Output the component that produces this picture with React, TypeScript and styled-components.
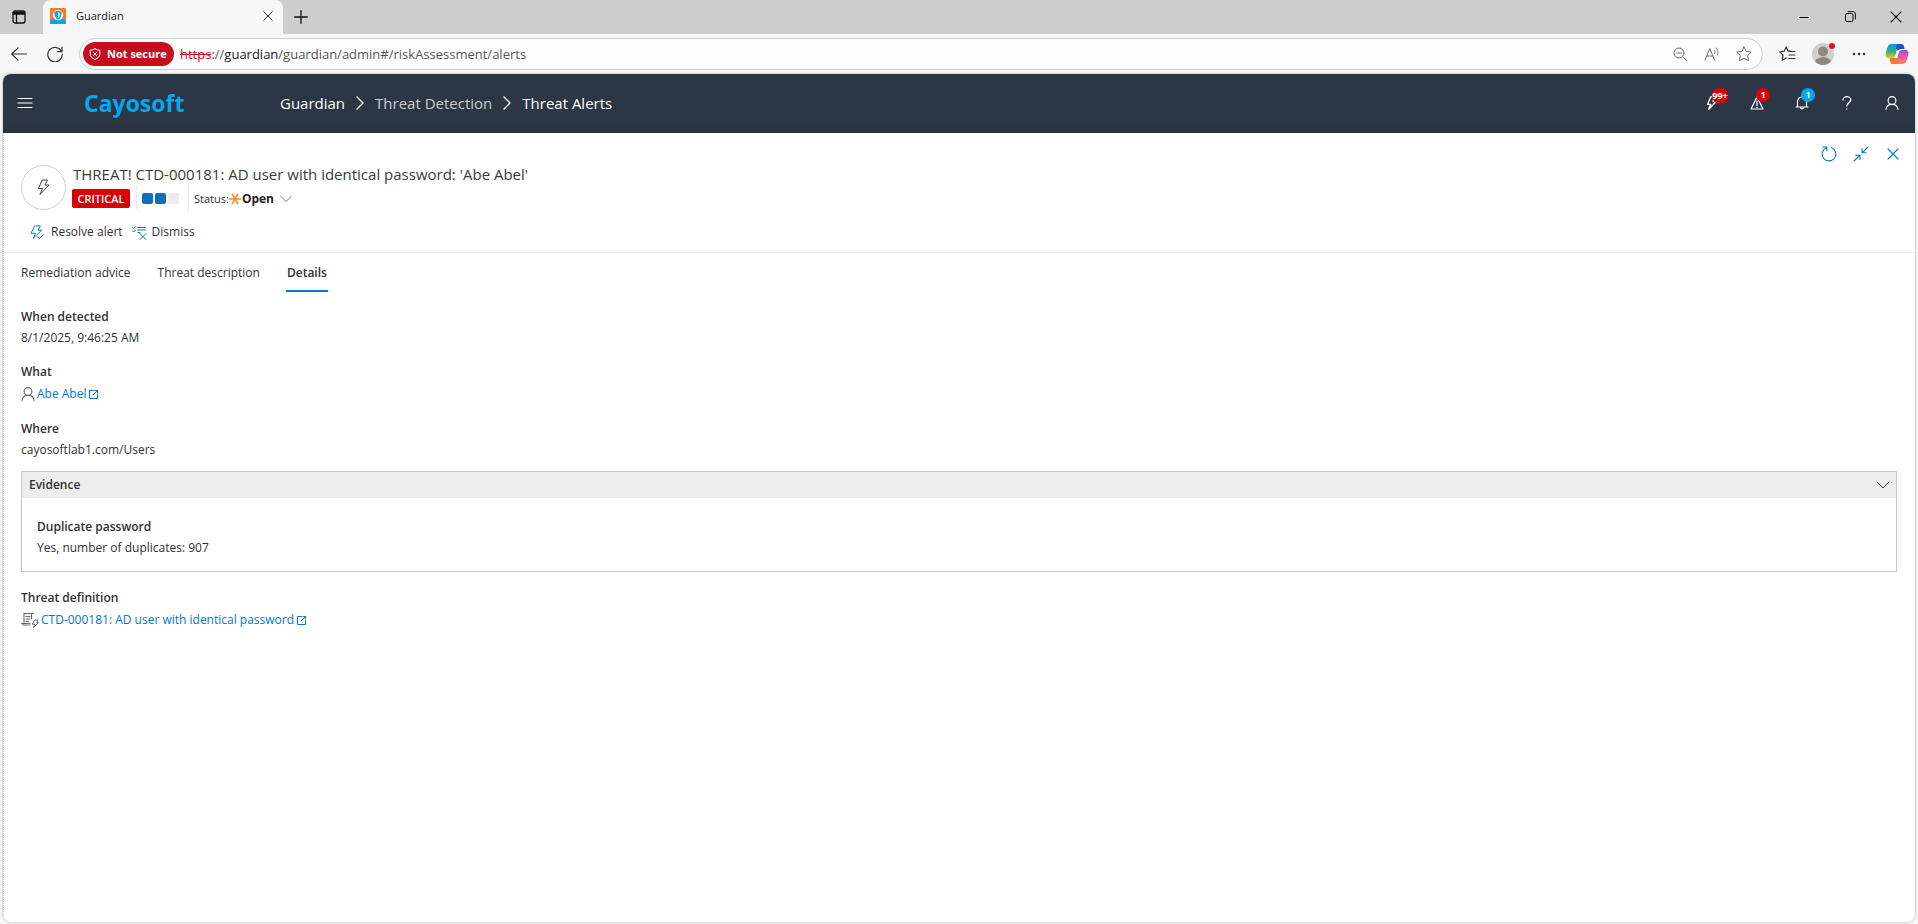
import React, { useState } from "react";
import styled, { createGlobalStyle, css } from "styled-components";

const GlobalStyle = createGlobalStyle`
  * { box-sizing: border-box; }
  html, body { margin: 0; padding: 0; }
  body {
    background: #f7f7f7;
    color: #323130;
    font-family: "Open Sans", "Noto Sans", sans-serif;
    font-size: 12px;
    line-height: 20px;
  }
  button, select { font: inherit; color: inherit; }
  h1, h2, dl, dd, dt, ol, p { margin: 0; padding: 0; font: inherit; }
  a { color: inherit; text-decoration: none; }
`;

/* ---------- browser frame ---------- */

const Window = styled.div`
  min-height: 100vh;
  display: flex;
  flex-direction: column;
`;

const TabStrip = styled.header`
  display: flex;
  height: 34px;
  background: #cdcdcd;
`;

const Plain = styled.button`
  display: inline-flex;
  align-items: center;
  justify-content: center;
  padding: 0;
  border: 0;
  background: none;
  cursor: pointer;
  position: relative;
`;

const StripButton = styled(Plain)<{ $w: number }>`
  width: ${(p) => p.$w}px;
  height: 34px;
  padding-bottom: 1px;
  color: #111;
`;

const Tab = styled.div`
  display: flex;
  align-items: center;
  width: 240px;
  margin-left: 5px;
  padding: 0 10px 2px 7px;
  gap: 10px;
  background: #f7f7f7;
  border-radius: 8px 8px 0 0;
  color: #1b1b1b;
  font-size: 11px;
`;

const TabTitle = styled.span`
  flex: 1;
`;

const Spacer = styled.div`
  flex: 1;
`;

const Toolbar = styled.div`
  display: flex;
  align-items: center;
  height: 40px;
  color: #333;
`;

const ToolButton = styled(Plain)<{ $w: number }>`
  width: ${(p) => p.$w}px;
  height: 30px;
`;

const AddressBar = styled.div`
  flex: 1;
  display: flex;
  align-items: center;
  height: 32px;
  margin: 0 7px 0 6px;
  padding: 0 2px 0 3px;
  border: 1px solid #cfcfd3;
  border-radius: 16px;
  background: #fdfdfd;
  color: #6a6a6a;
`;

const SecurityPill = styled.button`
  display: flex;
  align-items: center;
  gap: 6px;
  height: 24px;
  width: 91px;
  padding: 0 0 0 6px;
  border: 0;
  border-radius: 12px;
  background: #c50f1f;
  color: #fff;
  font-size: 11px;
  font-weight: 700;
  white-space: nowrap;
`;

const Url = styled.div`
  flex: 1;
  margin-left: 6px;
  font-size: 13px;
  color: #555;
  outline: none;
  s { color: #c50f1f; }
  b { color: #1b1b1b; font-weight: 400; }
`;

/* ---------- application frame ---------- */

const AppFrame = styled.div`
  flex: 1;
  display: flex;
  flex-direction: column;
  margin: 0 3px 2px;
  border-radius: 8px;
  background: #fff;
  overflow: hidden;
  box-shadow: 0 0 3px rgba(0, 0, 0, 0.3);
`;

const AppBar = styled.header`
  display: flex;
  align-items: center;
  height: 59px;
  padding: 0 1px 2px 0;
  background: linear-gradient(#2d3645 70%, #29323f);
  color: #fff;
`;

const MenuButton = styled(Plain)`
  width: 44px;
  height: 45px;
`;

const Brand = styled.a`
  width: 197px;
  padding-left: 37px;
  color: #00a9ee;
  font-size: 23px;
  line-height: 30px;
  font-weight: 700;
`;

const Crumbs = styled.nav`
  ol {
    display: flex;
    align-items: center;
    margin-left: 36px;
    list-style: none;
    font-size: 15px;
  }
  li {
    display: flex;
    align-items: center;
  }
  svg { margin: 0 10px; }
`;

const Crumb = styled.a<{ $dim?: boolean }>`
  color: ${(p) => (p.$dim ? "#c9cbce" : "#fff")};
`;

const BarButton = styled(Plain)`
  width: 45px;
  height: 45px;
`;

const Badge = styled.span<{ $color: string; $wide?: boolean }>`
  position: absolute;
  left: ${(p) => (p.$wide ? 23 : 22)}px;
  top: 8px;
  width: ${(p) => (p.$wide ? 16 : 14)}px;
  height: ${(p) => (p.$wide ? 16 : 14)}px;
  display: flex;
  align-items: center;
  justify-content: center;
  border-radius: 8px;
  background: ${(p) => p.$color};
  color: #fff;
  font-size: 9px;
  font-weight: 700;
`;

/* ---------- alert panel ---------- */

const Panel = styled.main`
  flex: 1;
  border-left: 1px dotted #c8c8c8;
`;

const PanelHeader = styled.div`
  display: flex;
  justify-content: space-between;
  align-items: flex-start;
  padding: 5px 6px 0 17px;
`;

const Identity = styled.div`
  display: flex;
  align-items: center;
  gap: 6px;
  margin-top: 24px;
`;

const Avatar = styled.div`
  display: flex;
  align-items: center;
  justify-content: center;
  width: 45px;
  height: 45px;
  margin-top: 1px;
  border: 1px solid #d2d0ce;
  border-radius: 50%;
  color: #444;
`;

const Title = styled.h1`
  font-size: 15px;
  line-height: 24px;
  padding-left: 1px;
  color: #3b3a39;
`;

const Meta = styled.div`
  display: flex;
  align-items: center;
  height: 25px;
`;

const Severity = styled.span`
  width: 58px;
  height: 19px;
  margin-right: 6px;
  border-radius: 2px;
  background: #d90007;
  color: #fff;
  font-size: 11px;
  line-height: 19px;
  font-weight: 600;
  text-align: center;
`;

const Level = styled.span`
  display: flex;
  align-items: center;
  gap: 2px;
  width: 53px;
  height: 25px;
  padding-left: 5px;
  border: 1px solid #edebe9;
  border-width: 0 1px;
`;

const LevelCell = styled.span<{ $on: boolean }>`
  width: 11px;
  height: 11px;
  border-radius: 2px;
  background: ${(p) => (p.$on ? "#106ebe" : "#edebe9")};
`;

const Status = styled.label`
  display: flex;
  align-items: center;
  padding-left: 5px;
  font-size: 11px;
  svg { color: #605e5c; }
  svg:first-of-type { margin-right: 1px; }
`;

const StatusSelect = styled.select`
  width: 38px;
  padding: 0;
  border: 0;
  appearance: none;
  background: none;
  font-size: 12px;
  font-weight: 700;
  color: #252423;
`;

const Actions = styled.div`
  display: flex;
`;

const ActionButton = styled(Plain)`
  width: 32px;
  height: 32px;
  color: #0078d4;
`;

const CommandBar = styled.div`
  display: flex;
  align-items: center;
  gap: 9px;
  height: 42px;
  padding: 1px 0 0 26px;
  border-bottom: 1px solid #edebe9;
`;

const Command = styled(Plain)<{ $gap: number }>`
  gap: ${(p) => p.$gap}px;
  svg { color: #0078d4; }
`;

const Tabs = styled.div`
  display: flex;
  gap: 25px;
  height: 39px;
  padding-left: 16px;
`;

const PanelTab = styled.button<{ $active: boolean }>`
  padding: 0 1px;
  border: 0;
  border-top: 2px solid transparent;
  border-bottom: 2px solid transparent;
  background: none;
  cursor: pointer;
  ${(p) =>
    p.$active &&
    css`
      border-bottom-color: #0078d4;
      font-weight: 600;
    `}
`;

const Details = styled.div`
  display: flex;
  flex-direction: column;
  gap: 13px;
  padding: 15px 18px 20px 17px;
`;

const Field = styled.dl`
  dt { font-weight: 600; }
  dd { line-height: 22px; }
`;

const LinkField = styled(Field)`
  dd {
    display: flex;
    align-items: center;
    gap: 2px;
    line-height: 24px;
    color: #666;
  }
`;

const ExternalLink = styled.a`
  display: flex;
  align-items: center;
  gap: 3px;
  color: #0078d4;
`;

const Evidence = styled.section`
  margin: -3px 0 3px;
  border: 1px solid #c8c8c8;
`;

const EvidenceHeader = styled.button`
  display: flex;
  align-items: center;
  justify-content: space-between;
  width: 100%;
  height: 26px;
  padding: 0 6px 0 7px;
  border: 0;
  background: #ededed;
  font-weight: 600;
`;

const EvidenceBody = styled.div`
  padding: 19px 15px 12px;
`;

/* ---------- icons ---------- */

type IconProps = { w?: number; h?: number; box?: string; sw?: number; children: React.ReactNode };

const Icon = ({ w = 16, h = 16, box, sw = 1, children }: IconProps) => (
  <svg
    width={w}
    height={h}
    viewBox={box ?? `0 0 ${w} ${h}`}
    fill="none"
    stroke="currentColor"
    strokeWidth={sw}
    strokeLinecap="round"
    strokeLinejoin="round"
    aria-hidden="true"
  >
    {children}
  </svg>
);

const CloseIcon = ({ size = 12 }: { size?: number }) => (
  <Icon w={size} h={size} box="0 0 12 12" sw={1.1}>
    <path d="M1 1l10 10M11 1L1 11" />
  </Icon>
);

const bolt = "M6.500 1H11.500L9 6H13L4 15.500 6.500 9.500H3z";

const PersonIcon = ({ w = 14 }: { w?: number }) => (
  <Icon w={w} h={w} box="0 0 14 14" sw={1.1}>
    <circle cx="7" cy="4.500" r="3.900" />
    <path d="M1 13.500C1.300 10.500 3.500 8.400 7 8.400s5.700 2.100 6 5.100" />
  </Icon>
);

const ExternalIcon = () => (
  <Icon w={10} h={10}>
    <path d="M4.500 1.500H.5v8H8.500V5.500M6 1.500H8.500V4M8.300 1.700L4 6" />
  </Icon>
);

const ChevronDown = ({ w = 12 }: { w?: number }) => (
  <Icon w={w} h={8} box="0 0 14 8">
    <path d="M1 1l6 6 6-6" />
  </Icon>
);

const CrumbChevron = () => (
  <Icon w={10} h={14} sw={1.4}>
    <path d="M2 1l6 6-6 6" />
  </Icon>
);

const CopilotIcon = () => (
  <svg width="24" height="22" viewBox="0 0 24 22" aria-hidden="true">
    <defs>
      <linearGradient id="cool" x1="0" y1="0" x2="0" y2="1">
        <stop offset="0" stopColor="#1a8fe8" />
        <stop offset=".55" stopColor="#2fb38a" />
        <stop offset="1" stopColor="#f2c71c" />
      </linearGradient>
      <linearGradient id="warm" x1="0" y1="0" x2="0" y2="1">
        <stop offset="0" stopColor="#9a4be8" />
        <stop offset=".55" stopColor="#ee5a9c" />
        <stop offset="1" stopColor="#fb8a4c" />
      </linearGradient>
    </defs>
    <path d="M7 1h9c-2 0-2.800 1.200-3.300 3l-2.200 8c-.6 2-1.500 3-3.500 3H4c-3 0-4-2-3.200-5l1.600-5.500C3.200 2 4.500 1 7 1z" fill="url(#cool)" />
    <path d="M12 1h4c1.700 0 2.400 1 2.900 2.600l.7 2.400H16c-1.500 0-2.300.7-2.700 2L11 6z" fill="#1557c8" />
    <path d="M17 21H8c2 0 2.800-1.200 3.300-3l2.200-8c.6-2 1.500-3 3.500-3h3c3 0 4 2 3.200 5l-1.600 5.500C20.800 20 19.500 21 17 21z" fill="url(#warm)" />
    <path d="M12 21H8c-1.700 0-2.400-1-2.900-2.600L4.400 15H8c1.500 0 2.300-.7 2.700-2l2 3z" fill="#f0793a" />
    <path d="M13 7h3.500c-2 .2-2.600 1.500-3 3l-1.300 5H9c1.200-.5 1.500-1.600 1.900-3z" fill="#fff" />
  </svg>
);

const Favicon = () => (
  <svg width="16" height="16" viewBox="0 0 16 16" aria-hidden="true">
    <rect width="16" height="16" rx="1" fill="#ff7a1a" />
    <path d="M0 12.500L4 11h8l4 1.500V16H0z" fill="#00a9ee" />
    <circle cx="8" cy="7" r="5.200" fill="#fff" />
    <path d="M8 2.500l3.800 1.300c0 3.800-.8 6-3.800 8-3-2-3.800-4.200-3.800-8z" fill="#1ba1e2" />
    <path d="M8 4.200l2.200.8c0 2.500-.6 4-2.200 5.200z" fill="#d9f2fd" />
  </svg>
);

/* ---------- page ---------- */

const tabNames = ["Remediation advice", "Threat description", "Details"];

export default function App() {
  const [tab, setTab] = useState("Details");
  const [open, setOpen] = useState(true);

  return (
    <Window>
      <GlobalStyle />
      <TabStrip>
        <StripButton $w={38} aria-label="Tab actions">
          <Icon w={14} h={14} sw={1.3}>
            <rect x="1" y="1" width="12" height="12" rx="2" />
            <path d="M1.500 2.500h11M1.500 4h11" strokeWidth="1.600" />
            <path d="M4.500 4.500V13" />
          </Icon>
        </StripButton>
        <Tab>
          <Favicon />
          <TabTitle>Guardian</TabTitle>
          <Plain aria-label="Close tab">
            <CloseIcon size={10} />
          </Plain>
        </Tab>
        <StripButton $w={36} aria-label="New tab">
          <Icon w={14} h={14} sw={1.3}>
            <path d="M7 .7v12.600M.7 7h12.600" />
          </Icon>
        </StripButton>
        <Spacer />
        <StripButton $w={46} aria-label="Minimize">
          <Icon w={10} h={10}>
            <path d="M0 5.500h10" />
          </Icon>
        </StripButton>
        <StripButton $w={46} aria-label="Restore">
          <Icon w={11} h={11}>
            <rect x=".5" y="2.500" width="7.500" height="8" rx="1.500" />
            <path d="M3 .6h5a2.400 2.400 0 0 1 2.400 2.400v5" />
          </Icon>
        </StripButton>
        <StripButton $w={45} aria-label="Close window">
          <CloseIcon size={12} />
        </StripButton>
      </TabStrip>

      <Toolbar>
        <ToolButton $w={37} aria-label="Back">
          <Icon w={16} h={14} sw={1.1}>
            <path d="M15.500 7H.7M7 .8L.7 7 7 13.200" />
          </Icon>
        </ToolButton>
        <ToolButton $w={36} aria-label="Refresh">
          <Icon w={16} h={16} sw={1.2}>
            <path d="M14.500 5.500A7.200 7.200 0 1 0 15.200 8M15 1v4.700h-4.700" />
          </Icon>
        </ToolButton>
        <AddressBar>
          <SecurityPill>
            <Icon w={12} h={12} sw={1}>
              <path d="M6 .6c1.500 1.100 3 1.500 4.800 1.600v3.600c0 2.800-1.800 4.500-4.800 5.700C3 10.300 1.200 8.600 1.200 5.800V2.200C3 2.100 4.500 1.700 6 .6zM4.300 4.300l3.400 3.400M7.700 4.300L4.300 7.700" />
            </Icon>
            Not secure
          </SecurityPill>
          <Url role="textbox" aria-label="Address">
            <s>https</s>://<b>guardian</b>/guardian/admin#/riskAssessment/alerts
          </Url>
          <ToolButton $w={32} aria-label="Zoom out">
            <Icon w={15} h={15}>
              <circle cx="6" cy="6" r="5" />
              <path d="M9.800 9.800L14 14M3.700 6h4.600" />
            </Icon>
          </ToolButton>
          <ToolButton $w={32} aria-label="Read aloud">
            <Icon w={16} h={14}>
              <path d="M1 13L5.800 1.500 10.500 13M2.700 9h6.200M10.300 3c.9 1 .9 2.500.3 3.600M12 1.200c2.200 1.700 2.500 4.600 1.300 7" />
            </Icon>
          </ToolButton>
          <ToolButton $w={32} aria-label="Add to favorites">
            <Icon w={16} h={16}>
              <path d="M8 .8l2.200 4.600 5 .7-3.600 3.500.9 5L8 12.300l-4.500 2.300.9-5L.8 6.100l5-.7z" />
            </Icon>
          </ToolButton>
        </AddressBar>
        <ToolButton $w={34} aria-label="Favorites">
          <Icon w={17} h={16} sw={1.2}>
            <path d="M11 4.800L8.900 5 7.200 1 5.200 5.200.8 5.900l3.200 3.300-.8 5 4-2.200M10 5.500h6M10 9h6M10 12.500h6" />
          </Icon>
        </ToolButton>
        <ToolButton $w={38} aria-label="Profile">
          <svg width="24" height="24" viewBox="0 0 24 24" aria-hidden="true">
            <circle cx="12" cy="12" r="11" fill="#d1cfcc" />
            <circle cx="12" cy="9.500" r="5" fill="#8b8885" />
            <path d="M4 19.500C6 16 9 15 12 15s6 1 8 4.500A11 11 0 0 1 4 19.500z" fill="#8b8885" />
            <circle cx="21" cy="4" r="3" fill="#e81123" />
          </svg>
        </ToolButton>
        <ToolButton $w={34} aria-label="Settings and more">
          <svg width="14" height="4" viewBox="0 0 14 4" aria-hidden="true" fill="#333">
            <circle cx="2" cy="2" r="1.300" />
            <circle cx="7" cy="2" r="1.300" />
            <circle cx="12" cy="2" r="1.300" />
          </svg>
        </ToolButton>
        <ToolButton $w={42} aria-label="Copilot">
          <CopilotIcon />
        </ToolButton>
      </Toolbar>

      <AppFrame>
        <AppBar>
          <MenuButton aria-label="Menu">
            <Icon w={16} h={12} sw={1.2}>
              <path d="M1 1.500h14M1 6h14M1 10.500h14" />
            </Icon>
          </MenuButton>
          <Brand href="#home">Cayosoft</Brand>
          <Crumbs aria-label="Breadcrumb">
            <ol>
              <li>
                <Crumb href="#guardian">Guardian</Crumb>
                <CrumbChevron />
              </li>
              <li>
                <Crumb href="#detection" $dim>Threat Detection</Crumb>
                <CrumbChevron />
              </li>
              <li>
                <Crumb href="#alerts" aria-current="page">Threat Alerts</Crumb>
              </li>
            </ol>
          </Crumbs>
          <Spacer />
          <BarButton aria-label="Threats">
            <Icon w={14} h={14} box="0 0 16 16" sw={1.5}>
              <path d={bolt} />
            </Icon>
            <Badge $color="#d90007" $wide>99+</Badge>
          </BarButton>
          <BarButton aria-label="Warnings">
            <Icon w={14} h={14} sw={1.2}>
              <path d="M7 1l6 12H1zM7 5v4.500M7 11v.5" />
            </Icon>
            <Badge $color="#d90007">1</Badge>
          </BarButton>
          <BarButton aria-label="Notifications">
            <Icon w={14} h={14} sw={1.2}>
              <path d="M2.500 11V5.500a4.500 4.500 0 0 1 9 0V11M1 11h12M5.500 11.500c.3 1.800 2.700 1.800 3 0" />
            </Icon>
            <Badge $color="#00a9ee">1</Badge>
          </BarButton>
          <BarButton aria-label="Help">
            <Icon w={10} h={14} sw={1.3}>
              <path d="M1 4a3.900 3.300 0 0 1 7.800 0c0 2.800-4 3-4 6M4.800 12.800v.2" />
            </Icon>
          </BarButton>
          <BarButton aria-label="Account">
            <PersonIcon />
          </BarButton>
        </AppBar>

        <Panel>
          <PanelHeader>
            <Identity>
              <Avatar>
                <Icon w={16} h={16}>
                  <path d={bolt} />
                </Icon>
              </Avatar>
              <div>
                <Title>THREAT! CTD-000181: AD user with identical password: 'Abe Abel'</Title>
                <Meta>
                  <Severity>CRITICAL</Severity>
                  <Level aria-label="Level 2 of 3">
                    <LevelCell $on />
                    <LevelCell $on />
                    <LevelCell $on={false} />
                  </Level>
                  <Status>
                    Status:
                    <svg width="12" height="12" viewBox="0 0 12 12" stroke="#ff8c2b" strokeWidth="1.700" aria-hidden="true">
                      <path d="M0 6h12M3 .8l6 10.400M9 .8L3 11.200" />
                    </svg>
                    <StatusSelect defaultValue="Open">
                      <option>Open</option>
                    </StatusSelect>
                    <ChevronDown />
                  </Status>
                </Meta>
              </div>
            </Identity>
            <Actions>
              <ActionButton aria-label="Refresh">
                <Icon w={16} h={16} sw={1.1}>
                  <path d="M5.500 1.800a6.800 6.800 0 1 0 5 0M2 1h3.800v3.800" />
                </Icon>
              </ActionButton>
              <ActionButton aria-label="Collapse">
                <Icon w={16} h={16} sw={1.1}>
                  <path d="M15 1L9.500 6.500M9 2.500v4.300h4.300M1 15l5.500-5.500M2.700 9.200H7v4.300" />
                </Icon>
              </ActionButton>
              <ActionButton aria-label="Close">
                <CloseIcon size={12} />
              </ActionButton>
            </Actions>
          </PanelHeader>

          <CommandBar>
            <Command $gap={6}>
              <Icon w={15} h={15} box="0 0 16 16">
                <path d="M5.500 1H11L8.500 5.500h4L3.500 14 5.800 8.800H1.500zM8 12.500l2 2L14.500 10" />
              </Icon>
              Resolve alert
            </Command>
            <Command $gap={5}>
              <Icon w={15} h={15}>
                <path d="M.5 2.500l1 1L3.500 1.500M.5 6l1 1 2-2M5.500 2.500h8M5.500 5h8M6 7.500h2M8 8.500l6 6M14 8.500l-6 6" />
              </Icon>
              Dismiss
            </Command>
          </CommandBar>

          <Tabs role="tablist">
            {tabNames.map((name) => (
              <PanelTab key={name} role="tab" aria-selected={tab === name} $active={tab === name} onClick={() => setTab(name)}>
                {name}
              </PanelTab>
            ))}
          </Tabs>

          <Details>
            <Field>
              <dt>When detected</dt>
              <dd>8/1/2025, 9:46:25 AM</dd>
            </Field>
            <LinkField>
              <dt>What</dt>
              <dd>
                <PersonIcon />
                <ExternalLink href="#user">
                  Abe Abel <ExternalIcon />
                </ExternalLink>
              </dd>
            </LinkField>
            <Field>
              <dt>Where</dt>
              <dd>cayosoftlab1.com/Users</dd>
            </Field>
            <Evidence>
              <EvidenceHeader aria-expanded={open} onClick={() => setOpen(!open)}>
                Evidence
                <ChevronDown w={14} />
              </EvidenceHeader>
              {open && (
                <EvidenceBody>
                  <Field>
                    <dt>Duplicate password</dt>
                    <dd>Yes, number of duplicates: 907</dd>
                  </Field>
                </EvidenceBody>
              )}
            </Evidence>
            <LinkField>
              <dt>Threat definition</dt>
              <dd>
                <Icon w={18} h={16}>
                  <path d="M3 1.500h9M3 1.500v9.500M12 1.500c-1 0-1.500.6-1.500 1.500v4M5 4.500h4M5 7h4M5 9.500h3M1 11.500h8M1 11.500c0 1 .5 1.500 1.500 1.500h6.500M14 8h3l-1.200 2.500h1.700L12.500 15.500l1.200-3.300h-2z" />
                </Icon>
                <ExternalLink href="#definition">
                  CTD-000181: AD user with identical password <ExternalIcon />
                </ExternalLink>
              </dd>
            </LinkField>
          </Details>
        </Panel>
      </AppFrame>
    </Window>
  );
}
